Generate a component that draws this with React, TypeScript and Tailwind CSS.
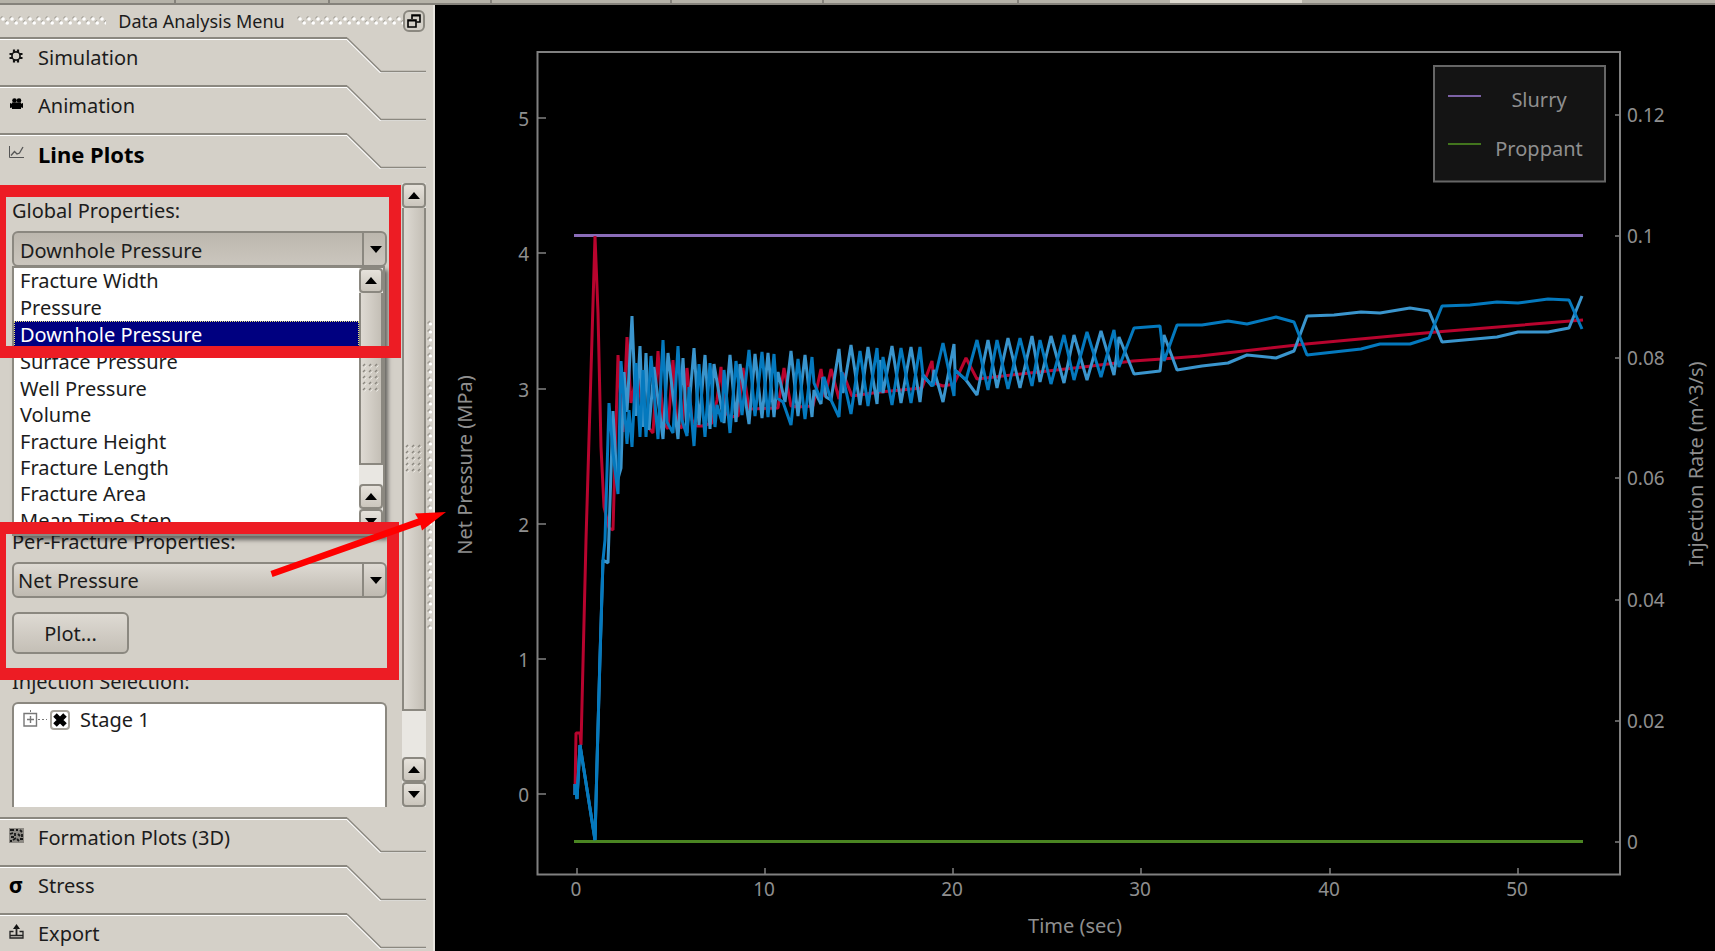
import React from "react";

type Point = [number, number];

const properties = [
  "Fracture Width",
  "Pressure",
  "Downhole Pressure",
  "Surface Pressure",
  "Well Pressure",
  "Volume",
  "Fracture Height",
  "Fracture Length",
  "Fracture Area",
  "Mean Time Step",
];

const downhole: Point[] = [
  [575, 795], [576, 733], [580, 733], [581, 745], [586, 540], [595, 236], [598, 313], [601, 447], [604, 507],
  [609, 528], [613, 530], [618, 355], [623, 432], [627, 337], [631, 403], [637, 373], [643, 413], [648, 427],
  [653, 433], [658, 351], [663, 422], [668, 429], [673, 360], [677, 425], [682, 428], [687, 368], [692, 420],
  [697, 426], [702, 426], [712, 423], [717, 400], [721, 367], [725, 412], [730, 417], [738, 416], [743, 368],
  [749, 409], [778, 408], [784, 368], [791, 406], [797, 407], [813, 406], [821, 369], [825, 397], [831, 369],
  [839, 399], [843, 373], [852, 396], [880, 392], [922, 388], [932, 361], [934, 383], [943, 386], [954, 384],
  [966, 358], [977, 379], [1030, 373], [1083, 367], [1133, 361], [1162, 359], [1200, 356], [1306, 344],
  [1436, 332], [1583, 320],
];

const fractureA: Point[] = [
  [575, 795], [575, 784], [577, 799], [580, 745], [595, 840], [597, 763], [600, 657], [603, 560], [608, 563],
  [613, 411], [617, 482], [621, 468], [624, 372], [627, 412], [632, 316], [636, 416], [640, 346], [643, 427],
  [646, 353], [649, 430], [654, 367], [663, 439], [668, 353], [678, 439], [683, 358], [687, 433], [694, 348],
  [699, 425], [705, 355], [710, 429], [714, 364], [724, 423], [730, 355], [736, 422], [740, 364], [749, 424],
  [755, 354], [762, 418], [768, 353], [774, 417], [778, 372], [785, 402], [791, 351], [798, 416], [805, 355],
  [812, 417], [814, 390], [821, 404], [823, 377], [826, 397], [831, 400], [839, 349], [843, 393], [851, 345],
  [860, 405], [868, 347], [877, 404], [880, 360], [883, 393], [892, 346], [901, 403], [911, 347], [920, 402],
  [923, 375], [932, 386], [934, 370], [943, 402], [954, 344], [955, 370], [966, 380], [977, 395], [988, 340],
  [997, 388], [1008, 338], [1020, 388], [1032, 336], [1040, 382], [1051, 336], [1064, 383], [1074, 335],
  [1087, 380], [1101, 331], [1114, 375], [1119, 337], [1134, 374], [1160, 371], [1164, 335], [1177, 370],
  [1202, 366], [1228, 363], [1247, 355], [1276, 358], [1294, 351], [1307, 316], [1334, 315], [1361, 312],
  [1380, 313], [1410, 308], [1429, 311], [1442, 342], [1497, 337], [1518, 332], [1548, 332], [1569, 328],
  [1582, 296],
];

const fractureB: Point[] = [
  [575, 795], [575, 784], [577, 799], [580, 745], [595, 840], [597, 763], [600, 657], [603, 560], [605, 540],
  [609, 403], [613, 453], [618, 494], [621, 361], [627, 444], [629, 410], [632, 447], [636, 363], [640, 437],
  [643, 370], [646, 437], [651, 356], [658, 439], [663, 340], [667, 422], [673, 433], [678, 346], [682, 420],
  [687, 436], [689, 387], [694, 446], [699, 364], [705, 437], [710, 363], [715, 427], [717, 405], [722, 422],
  [724, 370], [730, 433], [736, 361], [742, 415], [749, 350], [755, 416], [762, 352], [768, 417], [774, 354],
  [777, 398], [783, 402], [791, 425], [798, 359], [805, 419], [812, 357], [814, 383], [821, 400], [824, 377],
  [831, 400], [839, 417], [842, 372], [851, 414], [860, 351], [868, 406], [877, 348], [880, 392], [883, 357],
  [892, 405], [901, 348], [911, 403], [920, 347], [923, 376], [933, 386], [943, 343], [954, 396], [955, 370],
  [966, 380], [977, 340], [988, 390], [997, 340], [1008, 389], [1020, 338], [1032, 386], [1040, 340],
  [1051, 384], [1064, 335], [1074, 380], [1087, 332], [1101, 377], [1114, 330], [1119, 367], [1134, 328],
  [1160, 326], [1164, 361], [1177, 325], [1202, 325], [1228, 321], [1247, 324], [1276, 317], [1294, 322],
  [1307, 355], [1361, 349], [1380, 344], [1410, 344], [1429, 338], [1442, 306], [1470, 305], [1497, 302],
  [1518, 303], [1548, 299], [1569, 300], [1582, 329],
];

const toPoints = (points: Point[]) => points.map((p) => p.join(",")).join(" ");

const netTicks: [string, number][] = [["5", 118], ["4", 253], ["3", 389], ["2", 524], ["1", 659], ["0", 794]];
const timeTicks: [string, number][] = [["0", 577], ["10", 765], ["20", 953], ["30", 1141], ["40", 1330], ["50", 1518]];
const rateTicks: [string, number][] = [
  ["0.12", 115], ["0.1", 236], ["0.08", 358], ["0.06", 478], ["0.04", 600], ["0.02", 721], ["0", 842],
];

function GearIcon() {
  return (
    <svg className="size-4" viewBox="0 0 16 16" fill="none" stroke="#111">
      <circle cx="8" cy="8" r="4" strokeWidth="1.8" />
      <path strokeWidth="2.200" d="M6 4.500V1.500M10 4.500V1.500M6 14.500v-3M10 14.500v-3M4.500 6h-3M4.500 10h-3M14.500 6h-3M14.500 10h-3" />
      <circle cx="8" cy="8" r="3.200" fill="#d4d0c8" stroke="none" />
    </svg>
  );
}

function CameraIcon() {
  return (
    <svg className="size-4" viewBox="0 0 16 16" fill="#000">
      <circle cx="6.500" cy="4.500" r="2.300" />
      <circle cx="11" cy="4.500" r="2.300" />
      <path d="M4 6.500h9v1.200l2-.7v5l-2-.7V13H4v-1.500l-2 .5V7l2 .8z" />
    </svg>
  );
}

function PlotIcon() {
  return (
    <svg className="size-4" viewBox="0 0 16 16" fill="none" stroke="#555">
      <path d="M1.500 2v11.500H16" />
      <path d="M3 11.500 6.500 7.500 9 10l2.500-1L15 3" strokeWidth="1.300" />
    </svg>
  );
}

function FormationIcon() {
  return (
    <svg className="size-4" viewBox="0 0 16 16">
      <path fill="#8d8a84" d="M1 0h15v15H1z" />
      <path stroke="#181818" strokeWidth="1.800" d="M2 2h4M8 2h2M12 2l2 2M2 6l3-1M7 5v3M10 6l2 2M14 6v3M3 9h3M5 12l3-2M9 11l2 2M12 11h3M2 13h2" />
    </svg>
  );
}

function SigmaIcon() {
  return <span className="block text-center text-[22px] font-bold leading-4 text-black">σ</span>;
}

function ExportIcon() {
  return (
    <svg className="size-4" viewBox="0 0 16 16" fill="none" stroke="#222">
      <path fill="#111" stroke="none" d="M8.500 0 12 5H5z" />
      <path strokeWidth="1.800" d="M8.500 4v8" />
      <path strokeWidth="1.300" d="M5.500 7.500h-3.500v6.500h13V7.500h-3.500M2 11.500h13" />
    </svg>
  );
}

function Tab({ icon, label, active }: { icon: React.ReactNode; label: string; active?: boolean }) {
  return (
    <button type="button" aria-expanded={!!active} className="relative block h-9 w-full text-left">
      <span className="absolute inset-0 flex pr-[7px]">
        <span className="h-[3px] flex-1 border-t-2 border-b border-t-[#8b8880] border-b-white" />
        <svg className="h-9 w-[79px] flex-none" viewBox="0 0 79 36" fill="none" strokeWidth="1.500">
          <path stroke="#fff" d="M0 2.500 34 36H79" />
          <path stroke="#8b8880" d="M0 1 34 34.500H79" />
        </svg>
      </span>
      <span className="relative flex items-center gap-3 pt-1.5 pl-2">
        <span className="block size-4 flex-none -translate-y-0.5">{icon}</span>
        <span className={active ? "pl-0.5 text-[22px] leading-6 font-bold text-black" : "pl-0.5 text-[20px] leading-6"}>{label}</span>
      </span>
    </button>
  );
}

function Arrow({ down }: { down?: boolean }) {
  return (
    <svg className="h-[7px] w-3" viewBox="0 0 12 7" fill="#000">
      {down ? <path d="M0 0h12L6 7z" /> : <path d="M0 7h12L6 0z" />}
    </svg>
  );
}

function Scrollbar({ thumb }: { thumb: string }) {
  const step = "flex h-[25px] flex-none items-center justify-center rounded-sm border-2 border-[#8b8880] bg-linear-to-b from-[#e6e2db] to-[#cbc6bd]";
  return (
    <div className="flex h-full w-6 flex-none flex-col bg-[#e9e7e2]">
      <button type="button" aria-label="Scroll up" className={step}><Arrow /></button>
      <div className={`flex flex-none items-center justify-center border-2 border-t-0 border-[#8b8880] bg-linear-to-r from-[#dedad3] to-[#c4bfb6] ${thumb}`}>
        <svg className="h-[30px] w-[18px]" viewBox="0 0 18 30">
          <defs>
            <pattern id="grip" width="6" height="6" patternUnits="userSpaceOnUse">
              <path stroke="#8b8880" strokeWidth="1.500" d="M1 3 3 1" />
              <path stroke="#eceae5" d="M2.500 4.500 4.500 2.500" />
            </pattern>
          </defs>
          <rect width="18" height="30" fill="url(#grip)" />
        </svg>
      </div>
      <div className="flex-1" />
      <button type="button" aria-label="Step up" className={step}><Arrow /></button>
      <button type="button" aria-label="Step down" className={step}><Arrow down /></button>
    </div>
  );
}

function Combo({ id, value, options, open }: { id: string; value: string; options: string[]; open?: boolean }) {
  return (
    <div className="relative">
      <select
        id={id}
        defaultValue={value}
        className={
          open
            ? "block h-9 w-full appearance-none rounded-md border-2 border-[#8b8880] bg-linear-to-b from-[#bcb7ae] to-[#cbc6be] pt-1 pl-1.5 text-[20px] leading-6"
            : "block h-9 w-full appearance-none rounded-md border-2 border-[#8b8880] bg-linear-to-b from-[#dedad3] to-[#bfbab1] pt-0.5 pl-1 text-[20px] leading-6"
        }
      >
        {options.map((o) => (
          <option key={o}>{o}</option>
        ))}
      </select>
      <span className="pointer-events-none absolute inset-y-0.5 right-0 flex w-[25px] items-center justify-center border-l-2 border-[#8b8880]">
        <Arrow down />
      </span>
    </div>
  );
}

function Dots() {
  return (
    <svg className="h-3 min-w-0 flex-1" aria-hidden="true">
      <defs>
        <pattern id="dots" width="9" height="12" patternUnits="userSpaceOnUse">
          <path stroke="#a29e96" strokeWidth="1.500" d="M0.500 3.500 2.500 1.500M5 7.500 7 5.500" />
          <circle cx="3" cy="4" r="1.800" fill="#fff" />
          <circle cx="7.200" cy="8" r="1.800" fill="#fff" />
        </pattern>
      </defs>
      <rect width="100%" height="12" fill="url(#dots)" />
    </svg>
  );
}

function Chart() {
  return (
    <svg
      role="img"
      aria-label="Net pressure and injection rate over time"
      className="block h-full w-full font-['Noto_Sans','Open_Sans',sans-serif] text-[20px]"
      viewBox="435 5 1280 946"
      fill="#8f8f8f"
    >
      <rect x="537.500" y="52" width="1082.500" height="822.500" fill="none" stroke="#808080" strokeWidth="2" />
      <g stroke="#808080" strokeWidth="1.500">
        {netTicks.map(([t, y]) => <path key={t} d={`M538 ${y}h8`} />)}
        {timeTicks.map(([t, x]) => <path key={t} d={`M${x} 875v-7`} />)}
        {rateTicks.map(([t, y]) => <path key={t} d={`M1620 ${y}h-5`} />)}
      </g>
      <g className="text-[19px]">
        {netTicks.map(([t, y]) => <text key={t} textAnchor="end" x="529" y={y + 8}>{t}</text>)}
        {timeTicks.map(([t, x]) => <text key={t} textAnchor="middle" x={x - 1} y="896">{t}</text>)}
        {rateTicks.map(([t, y]) => <text key={t} x="1627" y={y + 7}>{t}</text>)}
      </g>
      <g textAnchor="middle">
        <text x="1075" y="933">Time (sec)</text>
        <text transform="translate(472 465) rotate(-90)">Net Pressure (MPa)</text>
        <text transform="translate(1703 464) rotate(-90)">Injection Rate (m^3/s)</text>
      </g>
      <g fill="none" strokeWidth="3">
        <path stroke="#8a6cb8" d="M574 235.500H1583" />
        <path stroke="#4a8522" d="M574 841.500H1583" />
      </g>
      <g fill="none" strokeWidth="3" strokeLinejoin="bevel">
        <polyline stroke="#b8042e" points={toPoints(downhole)} />
        <polyline stroke="#3a95cd" points={toPoints(fractureA)} />
        <polyline stroke="#0479be" points={toPoints(fractureB)} />
      </g>
      <rect x="1434" y="66" width="171" height="115.500" fill="#141414" stroke="#666" strokeWidth="2" />
      <path stroke="#7c62a6" strokeWidth="2" d="M1448 96h33" />
      <path stroke="#42751d" strokeWidth="2" d="M1448 144h33" />
      <g textAnchor="middle">
        <text x="1539" y="107">Slurry</text>
        <text x="1539" y="156">Proppant</text>
      </g>
    </svg>
  );
}

export default function App() {
  return (
    <div className="relative flex h-screen flex-col overflow-hidden bg-[#d4d0c8] font-['Noto_Sans','Open_Sans',sans-serif] text-[#1c1c1c]">
      <div className="flex h-[5px] flex-none border-b-2 border-[#85827b] bg-[#b5b2a8]">
        <div className="w-44 border-r-2 border-[#85827b]" />
        <div className="w-[154px] border-r-2 border-[#85827b]" />
        <div className="w-[162px] border-r-2 border-[#85827b]" />
        <div className="w-[180px] border-r-2 border-[#85827b]" />
        <div className="w-[152px] border-r-2 border-[#85827b]" />
        <div className="w-[195px] border-r-2 border-[#85827b]" />
        <div className="w-[151px]" />
        <div className="w-[132px] bg-[#dedad0]" />
      </div>

      <div className="flex min-h-0 flex-1">
        <aside className="relative flex w-[435px] flex-none flex-col border-r-2 border-[#e8e5df]">
          <header className="flex h-8 flex-none items-center gap-2 pr-2">
            <Dots />
            <h1 className="px-1 text-[18px] leading-6">Data Analysis Menu</h1>
            <Dots />
            <button type="button" aria-label="Float panel" className="-ml-2 flex size-[22px] flex-none items-center justify-center rounded-md border-2 border-[#8b8880]">
              <svg className="size-[14px]" viewBox="0 0 14 14" fill="none" stroke="#000" strokeWidth="1.600">
                <path d="M5 5V1h8v7h-3.500M5 1.800h8" />
                <path d="M1 6h8v7H1zM1 6.800h8" />
              </svg>
            </button>
          </header>

          <div className="flex flex-none flex-col gap-3 pb-3.5">
            <Tab icon={<GearIcon />} label="Simulation" />
            <Tab icon={<CameraIcon />} label="Animation" />
            <Tab icon={<PlotIcon />} label="Line Plots" active />
          </div>

          <div className="mb-[10px] flex min-h-0 flex-1 pr-[7px]">
            <div className="flex min-w-0 flex-1 flex-col overflow-hidden pt-4 pr-[15px] pl-3">
              <label htmlFor="global" className="text-[20px] leading-6">Global Properties:</label>
              <div className="relative mt-2 mb-[263px]">
                <Combo id="global" value="Downhole Pressure" options={properties} open />
                <div className="absolute top-[35px] right-0.5 left-0 flex h-[270px] border-2 border-[#8b8880] bg-white shadow-[3px_4px_4px_rgba(0,0,0,0.5)]">
                  <ul role="listbox" aria-label="Global property list" className="flex min-w-0 flex-1 flex-col">
                    {properties.map((p) => (
                      <li
                        key={p}
                        role="option"
                        aria-selected={p === "Downhole Pressure"}
                        className={
                          p === "Downhole Pressure"
                            ? "flex flex-1 items-center border border-dotted border-[#e8e37a] bg-[#000080] pl-[5px] text-[20px] leading-6 text-white"
                            : "flex flex-1 items-center pl-1.5 text-[20px] leading-6"
                        }
                      >
                        {p}
                      </li>
                    ))}
                  </ul>
                  <Scrollbar thumb="h-[172px]" />
                </div>
              </div>
              <label htmlFor="fracture" className="text-[20px] leading-6">Per-Fracture Properties:</label>
              <div className="mt-2">
                <Combo id="fracture" value="Net Pressure" options={["Net Pressure"]} />
              </div>
              <button type="button" className="mt-3.5 h-[42px] w-[117px] flex-none rounded-md border-2 border-[#8b8880] bg-linear-to-b from-[#dedad3] to-[#c4bfb6] pt-0.5 text-[20px] leading-6">
                Plot...
              </button>
              <h2 className="mt-4 text-[20px] leading-6">Injection Selection:</h2>
              <div className="mt-2 min-h-0 flex-1 rounded-t-md border-2 border-b-0 border-[#8b8880] bg-white pt-1 pl-2">
                <label className="flex items-center text-[20px] leading-6">
                  <svg className="h-5 w-7" viewBox="0 0 28 20" fill="none" stroke="#777">
                    <path d="M8.500 0v4M16 9.500h9" strokeDasharray="2 2" />
                    <path d="M2 3.500h12.500v12.500H2zM5 9.500h7M8.500 6v7" strokeWidth="1.400" />
                  </svg>
                  <span className="relative flex size-5 items-center justify-center">
                    <input type="checkbox" defaultChecked className="absolute inset-0 size-5 appearance-none rounded-sm border-2 border-[#a8a49c]" />
                    <svg className="pointer-events-none relative size-3.5" viewBox="0 0 14 14" stroke="#000" strokeWidth="5">
                      <path d="M2 2l10 10M12 2 2 12" />
                    </svg>
                  </span>
                  <span className="pl-2.5">Stage 1</span>
                </label>
              </div>
            </div>
            <Scrollbar thumb="h-[503px]" />
          </div>

          <div className="flex flex-none flex-col gap-3 pb-0.5">
            <Tab icon={<FormationIcon />} label="Formation Plots (3D)" />
            <Tab icon={<SigmaIcon />} label="Stress" />
            <Tab icon={<ExportIcon />} label="Export" />
          </div>

          <svg className="absolute top-[315px] right-0 h-[310px] w-[6px]" aria-hidden="true">
            <defs>
              <pattern id="handle" width="6" height="8" patternUnits="userSpaceOnUse">
                <path stroke="#a29e96" strokeWidth="1.500" d="M0.500 3.500 3 1" />
                <circle cx="3.500" cy="4" r="1.600" fill="#fff" />
              </pattern>
            </defs>
            <rect width="6" height="310" fill="url(#handle)" />
          </svg>

          <div className="pointer-events-none absolute top-[180px] -left-[6px] h-[173px] w-[407px] border-[12px] border-[#ed1c24]" />
          <div className="pointer-events-none absolute top-[517px] -left-[6px] h-[158px] w-[405px] border-[12px] border-[#ed1c24]" />
        </aside>

        <main className="min-w-0 flex-1 bg-black">
          <Chart />
        </main>
      </div>

      <svg className="pointer-events-none absolute top-[508px] left-[268px] h-[70px] w-[180px]" viewBox="268 508 180 70" fill="#fe0000" aria-hidden="true">
        <path d="M270.500 571 418 518.500 415 513.500 446 512 422 530.500 420.500 525 272.500 577z" />
      </svg>
    </div>
  );
}
